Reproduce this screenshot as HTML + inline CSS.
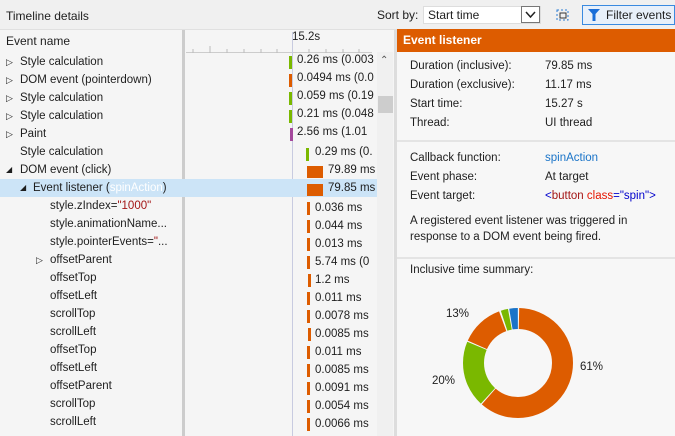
<!DOCTYPE html>
<html><head><meta charset="utf-8"><style>
*{margin:0;padding:0;box-sizing:border-box}
body{width:675px;height:436px;overflow:hidden;background:#f5f5f5;font-family:"Segoe UI","Liberation Sans",sans-serif;font-size:11.5px;color:#1e1e1e;position:relative}
.a{position:absolute;white-space:nowrap}
.bar{position:absolute;width:3px;height:13px}
.t{position:absolute;font-size:11.5px}
.o{background:#dd5c00}.g{background:#7ab800}.p{background:#a4489c}
.tri{display:inline-block;width:14px;font-size:9px;vertical-align:top}
</style></head><body>
<div class="a" style="left:0;top:0;width:675px;height:30px;background:#f0f0f0;border-bottom:1px solid #e0e0e0"></div>
<div class="a" style="left:6px;top:9px;font-size:12px">Timeline details</div>
<div class="a" style="left:377px;top:8px;font-size:12px">Sort by:</div>
<div class="a" style="left:423px;top:6px;width:118px;height:18px;background:#fff;border:1px solid #ddd"></div>
<div class="a" style="left:428px;top:8px;font-size:12px">Start time</div>
<div class="a" style="left:521px;top:6px;width:19px;height:17px;border:1px solid #777;background:#fff"></div>
<svg class="a" style="left:524px;top:10px" width="13" height="9"><path d="M2 2 L6.5 7 L11 2" fill="none" stroke="#222" stroke-width="1.5"/></svg>
<svg class="a" style="left:554px;top:7px" width="18" height="17"><rect x="3" y="3" width="11" height="10" fill="none" stroke="#2a7bd4" stroke-dasharray="2 2"/><rect x="6" y="6" width="6" height="5" fill="none" stroke="#333"/></svg>
<div class="a" style="left:582px;top:5px;width:93px;height:20px;border:1px solid #3a8ae0;background:#e8f0fa"></div>
<svg class="a" style="left:588px;top:9px" width="12" height="13"><path d="M0 0 H12 L7.5 5 V12 H4.5 V5 Z" fill="#1a6ed8"/></svg>
<div class="a" style="left:606px;top:8px;font-size:12px">Filter events</div>

<div class="a" style="left:182px;top:30px;width:3px;height:406px;background:#ccc"></div>
<div class="a" style="left:6px;top:34px;font-size:12px">Event name</div>
<div class="a" style="left:186px;top:52px;width:186px;height:1px;background:#ccc"></div>
<svg class="a" style="left:186px;top:44px" width="190" height="9"><g stroke="#bbb">
<line x1="7" y1="5" x2="7" y2="9"/><line x1="24" y1="2" x2="24" y2="9"/><line x1="41" y1="5" x2="41" y2="9"/><line x1="58" y1="5" x2="58" y2="9"/><line x1="75" y1="5" x2="75" y2="9"/><line x1="91" y1="5" x2="91" y2="9"/><line x1="123" y1="5" x2="123" y2="9"/><line x1="140" y1="5" x2="140" y2="9"/><line x1="157" y1="5" x2="157" y2="9"/><line x1="173" y1="5" x2="173" y2="9"/></g></svg>
<div class="a" style="left:292px;top:31px;font-size:11.5px">15.2s</div>
<div class="a" style="left:292px;top:32px;width:1px;height:404px;background:#c8cbe0"></div>
<div class="a" style="left:377px;top:52px;width:16px;height:384px;background:#f0f0f0"></div>
<div class="a" style="left:380px;top:55px;font-size:10px;color:#555">&#x2303;</div>
<div class="a" style="left:378px;top:96px;width:15px;height:17px;background:#cdcdcd"></div>

<div class="a" style="left:0;top:179px;width:377px;height:18px;background:#cce4f7"></div>

<div class="a" style="left:6px;top:53px;line-height:18px">
<div><span class="tri">▷</span>Style calculation</div><div><span class="tri">▷</span>DOM event (pointerdown)</div><div><span class="tri">▷</span>Style calculation</div><div><span class="tri">▷</span>Style calculation</div><div><span class="tri">▷</span>Paint</div>
<div style="padding-left:14px">Style calculation</div>
<div><span class="tri" style="font-size:8px">◢</span>DOM event (click)</div>
<div style="padding-left:14px"><span class="tri" style="font-size:8px;width:13px">◢</span>Event listener (<span style="color:#fff">spinAction</span>)</div>
</div>
<div class="a" style="left:50px;top:197px;line-height:18px">
<div>style.zIndex=<span style="color:#a31515">"1000"</span></div><div>style.animationName...</div><div>style.pointerEvents=<span style="color:#a31515">"</span>...</div>
<div style="position:relative"><span style="position:absolute;left:-14px;font-size:9px">▷</span>offsetParent</div>
<div>offsetTop</div><div>offsetLeft</div><div>scrollTop</div><div>scrollLeft</div><div>offsetTop</div><div>offsetLeft</div><div>offsetParent</div><div>scrollTop</div><div>scrollLeft</div>
</div>

<div class="bar g" style="left:289px;top:56px"></div><div class="t" style="left:297px;top:54px">0.26 ms (0.003</div>
<div class="bar o" style="left:289px;top:74px"></div><div class="t" style="left:297px;top:72px">0.0494 ms (0.0</div>
<div class="bar g" style="left:289px;top:92px"></div><div class="t" style="left:297px;top:90px">0.059 ms (0.19</div>
<div class="bar g" style="left:289px;top:110px"></div><div class="t" style="left:297px;top:108px">0.21 ms (0.048</div>
<div class="bar p" style="left:290px;top:128px"></div><div class="t" style="left:297px;top:126px">2.56 ms (1.01</div>
<div class="bar g" style="left:306px;top:148px"></div><div class="t" style="left:315px;top:146px">0.29 ms (0.</div>
<div class="a o" style="left:307px;top:166px;width:16px;height:12px"></div><div class="t" style="left:328px;top:164px">79.89 ms</div>
<div class="a o" style="left:307px;top:184px;width:16px;height:12px"></div><div class="t" style="left:328px;top:182px">79.85 ms</div>
<div class="a" style="left:307px;top:202px;width:3px">
<div class="bar o" style="top:0"></div><div class="bar o" style="top:18px"></div><div class="bar o" style="top:36px"></div><div class="bar o" style="top:54px"></div><div class="bar o" style="top:72px;left:1px"></div><div class="bar o" style="top:90px"></div><div class="bar o" style="top:108px"></div><div class="bar o" style="top:126px;left:1px"></div><div class="bar o" style="top:144px"></div><div class="bar o" style="top:162px"></div><div class="bar o" style="top:180px"></div><div class="bar o" style="top:198px"></div><div class="bar o" style="top:216px"></div>
</div>
<div class="a" style="left:315px;top:199px;line-height:18px">
<div>0.036 ms</div><div>0.044 ms</div><div>0.013 ms</div><div>5.74 ms (0</div><div>1.2 ms</div><div>0.011 ms</div><div>0.0078 ms</div><div>0.0085 ms</div><div>0.011 ms</div><div>0.0085 ms</div><div>0.0091 ms</div><div>0.0054 ms</div><div>0.0066 ms</div>
</div>

<div class="a" style="left:394px;top:30px;width:3px;height:406px;background:#ddd"></div>
<div class="a" style="left:397px;top:30px;width:278px;height:406px;background:#f7f7f7"></div>
<div class="a" style="left:397px;top:29px;width:278px;height:23px;background:#dd5c00"></div>
<div class="a" style="left:403px;top:33px;color:#fff;font-weight:bold;font-size:12px">Event listener</div>
<div class="a" style="left:410px;top:57px;line-height:19px"><div>Duration (inclusive):</div><div>Duration (exclusive):</div><div>Start time:</div><div>Thread:</div></div>
<div class="a" style="left:545px;top:57px;line-height:19px"><div>79.85 ms</div><div>11.17 ms</div><div>15.27 s</div><div>UI thread</div></div>
<div class="a" style="left:397px;top:140px;width:278px;height:2px;background:#e4e4e4"></div>
<div class="a" style="left:410px;top:149px;line-height:19px"><div>Callback function:</div><div>Event phase:</div><div>Event target:</div></div>
<div class="a" style="left:545px;top:149px;line-height:19px"><div style="color:#1a74c8">spinAction</div><div>At target</div><div><span style="color:#00c">&lt;</span><span style="color:#a31515">button</span> <span style="color:#e51400">class</span><span style="color:#00c">="spin"&gt;</span></div></div>
<div class="a" style="left:410px;top:213px;line-height:16px">A registered event listener was triggered in<br>response to a DOM event being fired.</div>
<div class="a" style="left:397px;top:257px;width:278px;height:2px;background:#e4e4e4"></div>
<div class="a" style="left:410px;top:264px">Inclusive time summary:</div>
<svg class="a" style="left:462px;top:307px" width="112" height="112" viewBox="-56 -56 112 112">
<g fill="none" stroke-width="21" transform="rotate(-90)">
<circle r="44.5" stroke="#dd5c00" stroke-dasharray="170.5 400" stroke-dashoffset="-1"/>
<circle r="44.5" stroke="#7ab800" stroke-dasharray="54.5 400" stroke-dashoffset="-172.5"/>
<circle r="44.5" stroke="#dd5c00" stroke-dasharray="35.5 400" stroke-dashoffset="-228"/>
<circle r="44.5" stroke="#7ab800" stroke-dasharray="6 400" stroke-dashoffset="-265"/>
<circle r="44.5" stroke="#1a74c8" stroke-dasharray="7 400" stroke-dashoffset="-272"/>
</g></svg>
<div class="a" style="left:446px;top:308px">13%</div>
<div class="a" style="left:432px;top:375px">20%</div>
<div class="a" style="left:580px;top:361px;color:#1e1e1e">61%</div>
</body></html>
